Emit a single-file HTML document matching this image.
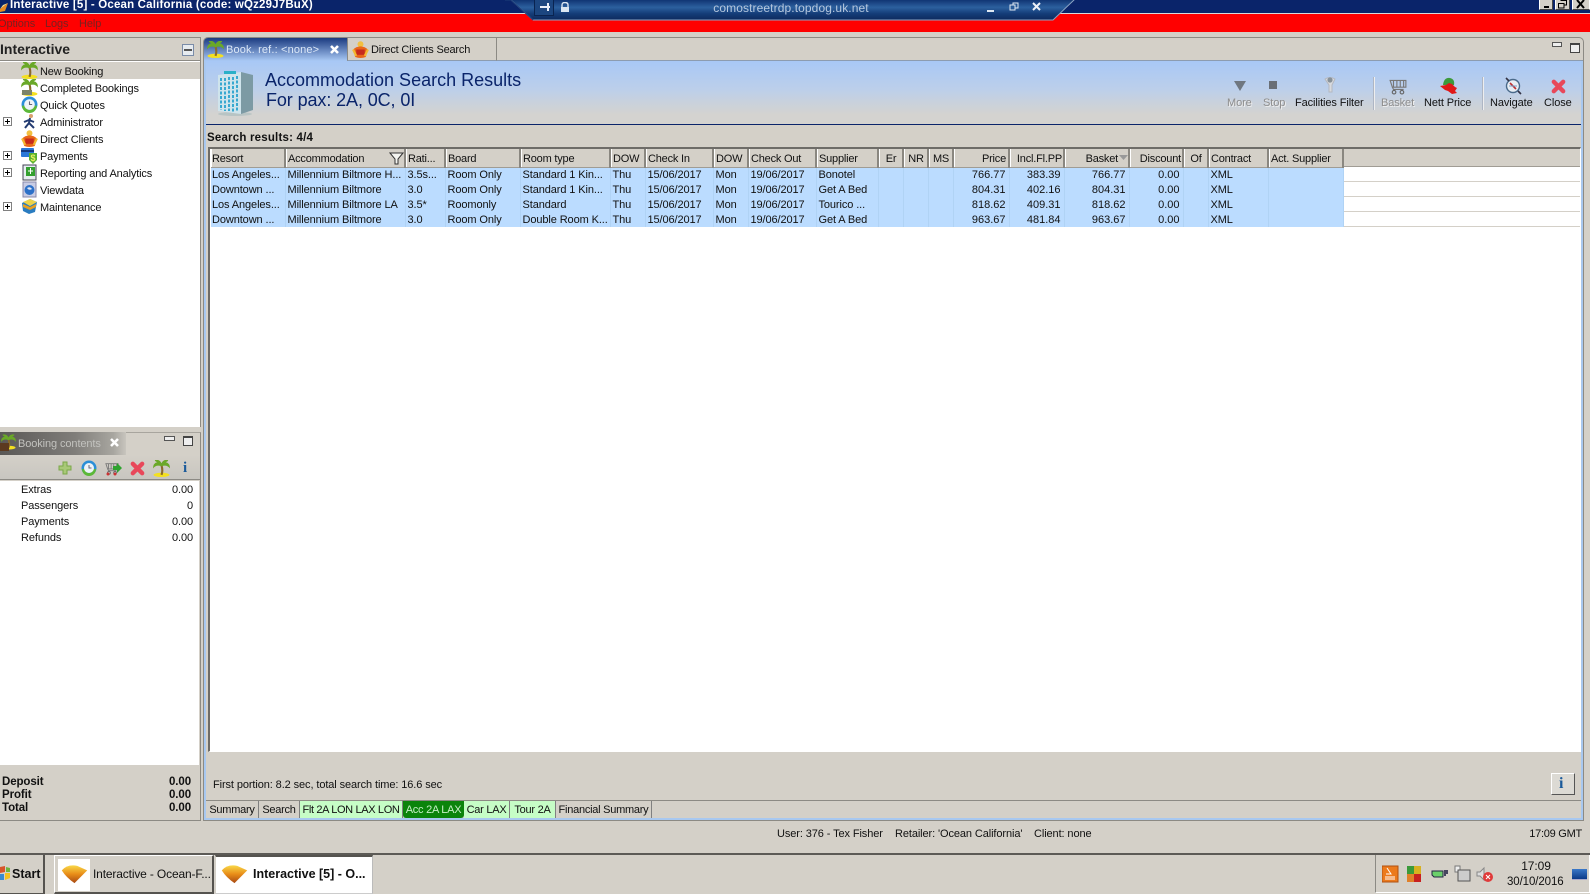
<!DOCTYPE html>
<html><head><meta charset="utf-8"><title>Interactive</title>
<style>
*{box-sizing:border-box}
html,body{margin:0;padding:0;width:1590px;height:894px;overflow:hidden;background:#d4d0c8}
body{position:relative;font:11px/14px "Liberation Sans",Arial,sans-serif;color:#111;letter-spacing:-.1px}
.a{position:absolute}
.t{position:absolute;white-space:nowrap}
.r{position:absolute;white-space:nowrap;text-align:right}
.m{position:absolute;display:block}
table{position:absolute;left:211px;top:149px;border-collapse:collapse;table-layout:fixed;width:1132px}
th{height:18px;padding:2px 1px 0 2px;font-weight:normal;text-align:left;background:#d4d0c8;border-right:2px solid #8a8780;border-bottom:1px solid #a09c94;box-shadow:inset 1px 0 0 #fff;white-space:nowrap;overflow:hidden;font-size:11px;letter-spacing:-.2px}
td{height:15px;padding:0 2px;background:#bbdcff;white-space:nowrap;overflow:hidden;border-right:1px solid #b0d3f5;line-height:14px;font-size:11px}
td:first-child,th:first-child{padding-left:1px}
td.n{text-align:right;padding-right:3px;letter-spacing:0}
.g{color:#8d8d8d;text-shadow:1px 1px 0 #eee}
.bt{position:absolute;top:801px;height:17px;text-align:center;line-height:19px;border-right:1px solid #808080;white-space:nowrap;letter-spacing:-.25px}
.tree{position:absolute;left:40px;white-space:nowrap;letter-spacing:-.15px}
.plus{position:absolute;left:3px;width:9px;height:9px;border:1px solid #808080;background:#fff}
.plus:before{content:"";position:absolute;left:1px;top:3px;width:5px;height:1px;background:#000}
.plus:after{content:"";position:absolute;left:3px;top:1px;width:1px;height:5px;background:#000}
</style></head><body>
<svg width="0" height="0" style="position:absolute"><defs>
<linearGradient id="gg" x1="0" y1="0" x2="0" y2="1"><stop offset="0" stop-color="#f9d848"/><stop offset=".5" stop-color="#e88c18"/><stop offset="1" stop-color="#a84a14"/></linearGradient>
<symbol id="palm" viewBox="0 0 16 16"><ellipse cx="8" cy="14" rx="7.5" ry="2" fill="#f4e020"/><path d="M8 5Q9.5 10 8 14" stroke="#8a6a2a" stroke-width="2" fill="none"/><path d="M8 6Q3 4 0 8Q0 3 4 2Q1 1 2 0Q6 -1 8 3Q10 -1 14 0Q15 1 12 2Q16 3 16 8Q13 4 8 6Z" fill="#6aa828"/></symbol>
<symbol id="gift" viewBox="0 0 16 16"><circle cx="8" cy="3" r="2.8" fill="#f2c040"/><path d="M1 8Q8 2 15 8L13 15Q8 17 3 15Z" fill="#e8661a"/><path d="M4 8H12V13H4Z" fill="#c62a1c"/><path d="M1 8L4 14M15 8L12 14" stroke="#f4b830" stroke-width="2"/></symbol>
<symbol id="x" viewBox="0 0 16 16"><path d="M3 3L13 13M13 3L3 13" stroke="#e8485a" stroke-width="4.6" stroke-linecap="round"/></symbol>
<symbol id="clock" viewBox="0 0 16 16"><circle cx="8" cy="8" r="7.5" fill="#2a8fd8"/><path d="M1 9A7 7 0 0 0 15 9L12 9A4 4 0 0 1 4 9Z" fill="#5cb838"/><circle cx="8" cy="8" r="5" fill="#eef4f8"/><path d="M8 5V8H10.5" stroke="#667" fill="none"/></symbol>
<symbol id="cart" viewBox="0 0 16 16"><path d="M1 3H15V9H3ZM4 3V9M7 3V9M10 3V9M13 3V9" stroke="#777" fill="none"/><path d="M3 9L4 11H13" stroke="#777" fill="none"/><circle cx="4.5" cy="13.5" r="1.6" fill="none" stroke="#666"/><circle cx="11.5" cy="13.5" r="1.6" fill="none" stroke="#666"/></symbol>
<symbol id="gem" viewBox="0 0 30 22"><path d="M1 7Q7 0 18 2L29 7L15 21Q6 15 1 7Z" fill="url(#gg)"/></symbol>
</defs></svg>

<!-- title bar -->
<div class="a" style="left:0;top:0;width:1590px;height:13px;background:#0a246a;overflow:hidden">
<div class="t" style="left:10px;top:-2px;color:#fff;font:bold 11.5px/15px 'Liberation Sans',sans-serif;letter-spacing:.18px">Interactive [5] - Ocean California (code: wQz29J7BuX)</div>
<svg class="m" style="left:0;top:0" width="9" height="13"><path d="M0 9L8 3L5 11L0 12Z" fill="#e88a20"/><path d="M0 9L8 3L3 5Z" fill="#fbe090"/></svg>
</div>
<div class="a" style="left:0;top:13px;width:1590px;height:1px;background:#d9d9d9"></div>
<div class="a" style="left:0;top:14px;width:1590px;height:18px;background:#f00"></div>
<div class="t" style="left:-2px;top:17px;color:#7a2020">Options</div>
<div class="t" style="left:45px;top:17px;color:#7a2020">Logs</div>
<div class="t" style="left:79px;top:17px;color:#7a2020">Help</div>

<!-- window buttons -->
<div class="a" style="left:1539px;top:-4px;width:14px;height:14px;background:#d4d0c8;border:1px solid #fff;border-right-color:#444;border-bottom-color:#444"></div>
<div class="a" style="left:1544px;top:6px;width:5px;height:2px;background:#000"></div>
<div class="a" style="left:1555px;top:-4px;width:15px;height:14px;background:#d4d0c8;border:1px solid #fff;border-right-color:#444;border-bottom-color:#444"></div>
<svg class="m" style="left:1557px;top:0" width="11" height="9"><path d="M3.5 .5H9.5V5H7M1.5 3.5H7V8H1.5Z" fill="none" stroke="#000"/></svg>
<div class="a" style="left:1572px;top:-4px;width:18px;height:14px;background:#d4d0c8;border:1px solid #fff;border-bottom-color:#444"></div>
<svg class="m" style="left:1576px;top:0" width="10" height="9"><path d="M1 0L8 8M8 0L1 8" stroke="#000" stroke-width="2"/></svg>

<!-- RDP bar -->
<svg class="m" style="left:505px;top:0" width="575" height="23">
<defs><linearGradient id="rd" x1="0" y1="0" x2="0" y2="1"><stop offset="0" stop-color="#0d2f6e"/><stop offset=".4" stop-color="#2c609e"/><stop offset=".7" stop-color="#143c78"/><stop offset="1" stop-color="#0e2a5e"/></linearGradient></defs>
<path d="M5 -1L28 20H548L570 -1Z" fill="url(#rd)" stroke="#8ca4c4"/>
<path d="M0 0L6 0L28 20" fill="none" stroke="#1c3e78"/>
</svg>
<div class="a" style="left:534px;top:-1px;width:20px;height:17px;border:1px solid #0a2450;background:#1c4680"></div>
<svg class="m" style="left:540px;top:2px" width="36" height="11"><path d="M0 5H10M8 1V9" stroke="#e8eef8" stroke-width="2" fill="none"/><path d="M22 5V3Q22 .5 25 .5Q28 .5 28 3V5" stroke="#dce6f2" fill="none" stroke-width="1.4"/><path d="M21 5H29V10H21Z" fill="#dce6f2"/></svg>
<div class="t" style="left:691px;top:1px;width:200px;text-align:center;color:#b6c8df;font-size:12px;letter-spacing:.1px">comostreetrdp.topdog.uk.net</div>
<svg class="m" style="left:985px;top:2px" width="62" height="11"><path d="M2 9H9" stroke="#dfe8f2" stroke-width="2"/><path d="M25 3H30V8H25ZM28 3V1H33V6H30" fill="none" stroke="#dfe8f2"/><path d="M48 1L55 8M55 1L48 8" stroke="#eef2f8" stroke-width="2"/></svg>

<!-- Left top panel -->
<div class="a" style="left:0;top:37px;width:201px;height:390px;background:#fff;border-top:1px solid #8c8a84;border-right:1px solid #8c8a84"></div>
<div class="a" style="left:0;top:38px;width:200px;height:23px;background:#d4d0c8;border-bottom:1px solid #8c8a84"></div>
<div class="t" style="left:0;top:41px;font:bold 14px/17px 'Liberation Sans',sans-serif;color:#222;letter-spacing:0">Interactive</div>
<div class="a" style="left:182px;top:44px;width:12px;height:12px;border:1px solid #7a8ca8;background:#e6ebf0"></div>
<div class="a" style="left:184px;top:49px;width:8px;height:2px;background:#555"></div>
<div class="a" style="left:0;top:62px;width:200px;height:17px;background:#d4d0c8"></div>
<svg class="m" style="left:21px;top:62px" width="17" height="17"><use href="#palm"/></svg>
<svg class="m" style="left:21px;top:79px" width="17" height="17"><use href="#palm"/><rect x="1" y="11" width="10" height="5" fill="#7c8468"/></svg>
<svg class="m" style="left:21px;top:96px" width="17" height="17"><use href="#clock"/></svg>
<svg class="m" style="left:22px;top:113px" width="16" height="17"><circle cx="9" cy="3" r="2" fill="#d9a070"/><path d="M8 5L7 10L3 15M7 10L12 15M7 7L12 9M7 7L2 9" stroke="#223a70" stroke-width="2" fill="none"/></svg>
<svg class="m" style="left:21px;top:130px" width="17" height="17"><use href="#gift"/></svg>
<svg class="m" style="left:21px;top:147px" width="17" height="17"><rect x="0" y="1" width="13" height="9" rx="1" fill="#2a78d8"/><rect x="0" y="3" width="13" height="2" fill="#123a80"/><path d="M8 6H16V13L12 17L8 13Z" fill="#58b030"/><text x="9.5" y="14" font-size="9" font-weight="bold" fill="#e8f060" font-family="Liberation Sans">$</text></svg>
<svg class="m" style="left:22px;top:164px" width="16" height="17"><rect x="1" y="1" width="13" height="15" fill="#e8eef2" stroke="#445"/><rect x="4" y="3" width="9" height="9" fill="#34a030"/><path d="M6 7H11M8.5 4V10" stroke="#fff"/></svg>
<svg class="m" style="left:22px;top:181px" width="16" height="17"><rect x="1" y="1" width="13" height="15" fill="#c8cce4" stroke="#8888aa"/><circle cx="7.5" cy="9" r="5" fill="#2c70c8"/><path d="M5 7Q8 5 10 8Q7 10 5 7" fill="#dfe8f8"/></svg>
<svg class="m" style="left:21px;top:198px" width="17" height="17"><path d="M1 5L9 1L16 4L14 14L8 16L2 13Z" fill="#2a7cc0"/><path d="M2 4L9 1L16 4L9 8Z" fill="#ecd34a"/><path d="M2 6L9 9L15 6V9L9 12L2 9Z" fill="#e8a020"/></svg>
<div class="tree" style="top:65px">New Booking</div>
<div class="tree" style="top:82px">Completed Bookings</div>
<div class="tree" style="top:99px">Quick Quotes</div>
<div class="tree" style="top:116px">Administrator</div>
<div class="tree" style="top:133px">Direct Clients</div>
<div class="tree" style="top:150px">Payments</div>
<div class="tree" style="top:167px">Reporting and Analytics</div>
<div class="tree" style="top:184px">Viewdata</div>
<div class="tree" style="top:201px">Maintenance</div>
<div class="plus" style="top:117px"></div><div class="plus" style="top:151px"></div><div class="plus" style="top:168px"></div><div class="plus" style="top:202px"></div>

<!-- Left bottom panel -->
<div class="a" style="left:0;top:432px;width:201px;height:389px;background:#d4d0c8;border-top:1px solid #a8a59e;border-right:1px solid #8c8a84;border-bottom:1px solid #8c8a84"></div>
<div class="a" style="left:0;top:432px;width:126px;height:23px;background:linear-gradient(90deg,#5a5856,#807e7a 60%,#a8a6a0 90%,#c8c5be);"></div>
<svg class="m" style="left:0;top:434px" width="16" height="19"><use href="#palm" x="1" y="0" width="15" height="16"/><rect x="0" y="9" width="9" height="8" fill="#5c3a20"/></svg>
<div class="t" style="left:18px;top:437px;color:#c2c2be;font-size:11px">Booking contents</div>
<svg class="m" style="left:109px;top:437px" width="11" height="11"><path d="M2 2L9 9M9 2L2 9" stroke="#fff" stroke-width="2.6"/></svg>
<div class="a" style="left:164px;top:436px;width:11px;height:5px;border:1px solid #555;background:#eee"></div>
<div class="a" style="left:183px;top:436px;width:10px;height:10px;border:1px solid #444;border-top-width:2px;background:#eee"></div>
<div class="a" style="left:0;top:455px;width:200px;height:25px;background:linear-gradient(#d4d0c8,#c8c6c0);border-bottom:1px solid #8c8a84"></div>
<svg class="m" style="left:58px;top:461px" width="14" height="15"><path d="M5 1H9V5H13V9H9V13H5V9H1V5H5Z" fill="#a8c878" stroke="#7aa848"/></svg>
<svg class="m" style="left:81px;top:460px" width="16" height="16"><use href="#clock"/></svg>
<svg class="m" style="left:105px;top:460px" width="18" height="16"><use href="#cart" width="14" height="16"/><path d="M8 6H12V3L17 8L12 13V10H8Z" fill="#2fa32f"/><circle cx="3" cy="14" r="1.5" fill="#c33"/><circle cx="10" cy="14" r="1.5" fill="#c33"/></svg>
<svg class="m" style="left:130px;top:461px" width="15" height="15"><use href="#x"/></svg>
<svg class="m" style="left:153px;top:460px" width="17" height="17"><use href="#palm"/></svg>
<div class="t" style="left:183px;top:459px;font:bold 15px/18px 'Liberation Serif',serif;color:#1a5a9a">i</div>
<div class="a" style="left:0;top:481px;width:199px;height:284px;background:#fff"></div>
<div class="t" style="left:21px;top:483px">Extras</div><div class="r" style="right:1397px;top:483px">0.00</div>
<div class="t" style="left:21px;top:499px">Passengers</div><div class="r" style="right:1397px;top:499px">0</div>
<div class="t" style="left:21px;top:515px">Payments</div><div class="r" style="right:1397px;top:515px">0.00</div>
<div class="t" style="left:21px;top:531px">Refunds</div><div class="r" style="right:1397px;top:531px">0.00</div>
<div class="t" style="left:2px;top:776px;font:bold 11.5px/13px 'Liberation Sans',sans-serif">Deposit<br>Profit<br>Total</div>
<div class="r" style="right:1399px;top:776px;font:bold 11.5px/13px 'Liberation Sans',sans-serif">0.00<br>0.00<br>0.00</div>

<!-- Main panel -->
<div class="a" style="left:203px;top:37px;width:1381px;height:784px;background:#d4d0c8;border:1px solid #8c8a84;border-radius:5px 5px 0 0"></div>
<div class="a" style="left:204px;top:61px;width:2px;height:758px;background:#a8c8f0"></div>
<div class="a" style="left:1581px;top:61px;width:2px;height:758px;background:#a8c8f0"></div>
<div class="a" style="left:204px;top:818px;width:1379px;height:2px;background:#a8c8f0"></div>
<div class="a" style="left:204px;top:60px;width:1379px;height:1px;background:#8c9cb0"></div>
<!-- active tab -->
<div class="a" style="left:204px;top:38px;width:143px;height:23px;background:linear-gradient(#1a3a80,#a9c9f5);border-radius:4px 0 0 0"></div>
<svg class="m" style="left:207px;top:41px" width="17" height="17"><use href="#palm"/></svg>
<div class="t" style="left:226px;top:43px;color:#dce8f8;letter-spacing:.15px">Book. ref.: &lt;none&gt;</div>
<svg class="m" style="left:329px;top:44px" width="11" height="11"><path d="M2 2L9 9M9 2L2 9" stroke="#fff" stroke-width="2.6"/></svg>
<div class="a" style="left:347px;top:38px;width:150px;height:23px;background:#d4d0c8;border-right:1px solid #8c8a84;border-left:1px solid #8c8a84;border-bottom:1px solid #8c9cb0"></div>
<svg class="m" style="left:352px;top:41px" width="17" height="17"><use href="#gift"/></svg>
<div class="t" style="left:371px;top:43px;letter-spacing:-.2px">Direct Clients Search</div>
<div class="a" style="left:1552px;top:42px;width:10px;height:5px;border:1px solid #555;background:#eee"></div>
<div class="a" style="left:1570px;top:43px;width:10px;height:10px;border:1px solid #444;border-top-width:2px;background:#eee"></div>

<!-- blue header -->
<div class="a" style="left:206px;top:61px;width:1375px;height:63px;background:linear-gradient(#a8c8f6,#bccfea 45%,#d4d3d0 85%)"></div>
<div class="a" style="left:206px;top:124px;width:1375px;height:1px;background:#0a246a"></div>
<svg class="m" style="left:217px;top:68px" width="38" height="48"><ellipse cx="18" cy="46" rx="17" ry="2" fill="#b8c4c4"/><path d="M1 7L24 4V46L1 43Z" fill="#cfe4ec"/><path d="M24 4L36 7V42L24 46Z" fill="#7c9aa4"/><g stroke="#38a8d0" stroke-width="2" stroke-dasharray="3 1.5"><path d="M4 10V42M8 10V43M12 9V43M16 9V44M20 8V44"/></g><rect x="7" y="3" width="12" height="3" fill="#2ab0c8"/></svg>
<div class="t" style="left:265px;top:69px;font:18px/22px 'Liberation Sans',sans-serif;color:#0a246a;letter-spacing:0">Accommodation Search Results</div>
<div class="t" style="left:266px;top:89px;font:18px/22px 'Liberation Sans',sans-serif;color:#0a246a;letter-spacing:-.1px">For pax: 2A, 0C, 0I</div>

<!-- toolbar -->
<svg class="m" style="left:1233px;top:80px" width="14" height="12"><path d="M1 1H13L7 11Z" fill="#6f7780"/></svg>
<div class="a" style="left:1269px;top:81px;width:8px;height:8px;background:#6a6f76"></div>
<svg class="m" style="left:1322px;top:76px" width="16" height="18"><path d="M3 3Q8 0 13 3L10 9V16H7V9Z" fill="#d8dade" stroke="#b4b8c0"/><circle cx="8" cy="4" r="2.6" fill="#88929a"/></svg>
<svg class="m" style="left:1389px;top:77px" width="18" height="18"><use href="#cart"/></svg>
<svg class="m" style="left:1440px;top:77px" width="18" height="18"><path d="M3 8Q4 0 10 1Q15 2 14 8Z" fill="#3c9a3c"/><path d="M0 9L6 8L9 6L12 7L15 10L17 11L15 14L17 16L12 17L8 14L5 13Z" fill="#e01818"/></svg>
<svg class="m" style="left:1504px;top:77px" width="18" height="18"><circle cx="9" cy="9" r="6.5" fill="#e8eef4" stroke="#4a6a8a" stroke-width="1.4"/><path d="M6 6L12 12" stroke="#c03030" stroke-width="1.6"/><path d="M5 9L13 9" stroke="#78a0c8"/><path d="M2 1L5 4M14 14L17 17" stroke="#334" stroke-width="1.6"/></svg>
<svg class="m" style="left:1551px;top:79px" width="15" height="15"><use href="#x"/></svg>
<div class="a" style="left:1373px;top:77px;width:1px;height:33px;background:#aeb6c4;box-shadow:1px 0 0 #eee"></div>
<div class="a" style="left:1482px;top:77px;width:1px;height:33px;background:#aeb6c4;box-shadow:1px 0 0 #eee"></div>
<div class="t g" style="left:1227px;top:96px">More</div>
<div class="t g" style="left:1263px;top:96px">Stop</div>
<div class="t" style="left:1295px;top:96px">Facilities Filter</div>
<div class="t g" style="left:1381px;top:96px">Basket</div>
<div class="t" style="left:1424px;top:96px">Nett Price</div>
<div class="t" style="left:1490px;top:96px">Navigate</div>
<div class="t" style="left:1544px;top:96px">Close</div>

<div class="t" style="left:207px;top:131px;font:bold 11.5px/14px 'Liberation Sans',sans-serif;letter-spacing:.2px">Search results: 4/4</div>

<!-- table frame -->
<div class="a" style="left:208px;top:147px;width:1373px;height:605px;background:#fff;border:2px solid #6e6c68;border-right:1px solid #fff;border-bottom:1px solid #fff"></div>
<div class="a" style="left:1343px;top:149px;width:237px;height:18px;background:#d4d0c8;border-bottom:1px solid #a09c94"></div>
<div class="a" style="left:1343px;top:181px;width:237px;height:1px;background:#d4d0c8"></div>
<div class="a" style="left:1343px;top:196px;width:237px;height:1px;background:#d4d0c8"></div>
<div class="a" style="left:1343px;top:211px;width:237px;height:1px;background:#d4d0c8"></div>
<div class="a" style="left:1343px;top:226px;width:237px;height:1px;background:#d4d0c8"></div>
<table>
<colgroup><col style="width:74px"><col style="width:120px"><col style="width:40px"><col style="width:75px"><col style="width:90px"><col style="width:35px"><col style="width:68px"><col style="width:35px"><col style="width:68px"><col style="width:62px"><col style="width:25px"><col style="width:25px"><col style="width:25px"><col style="width:56px"><col style="width:55px"><col style="width:65px"><col style="width:54px"><col style="width:25px"><col style="width:60px"><col style="width:75px"></colgroup>
<tr><th>Resort</th><th>Accommodation</th><th>Rati...</th><th>Board</th><th>Room type</th><th>DOW</th><th>Check In</th><th>DOW</th><th>Check Out</th><th>Supplier</th><th style="text-align:center">Er</th><th style="text-align:center">NR</th><th style="text-align:center">MS</th><th style="text-align:right;padding-right:2px">Price</th><th style="text-align:right;padding-right:1px">Incl.Fl.PP</th><th style="text-align:right;padding-right:10px">Basket</th><th style="text-align:right;padding-right:1px">Discount</th><th style="text-align:center">Of</th><th>Contract</th><th>Act. Supplier</th></tr>
<tr><td>Los Angeles...</td><td>Millennium Biltmore H...</td><td>3.5s...</td><td>Room Only</td><td>Standard 1 Kin...</td><td>Thu</td><td>15/06/2017</td><td>Mon</td><td>19/06/2017</td><td>Bonotel</td><td></td><td></td><td></td><td class="n">766.77</td><td class="n">383.39</td><td class="n">766.77</td><td class="n">0.00</td><td></td><td>XML</td><td></td></tr>
<tr><td>Downtown ...</td><td>Millennium Biltmore</td><td>3.0</td><td>Room Only</td><td>Standard 1 Kin...</td><td>Thu</td><td>15/06/2017</td><td>Mon</td><td>19/06/2017</td><td>Get A Bed</td><td></td><td></td><td></td><td class="n">804.31</td><td class="n">402.16</td><td class="n">804.31</td><td class="n">0.00</td><td></td><td>XML</td><td></td></tr>
<tr><td>Los Angeles...</td><td>Millennium Biltmore LA</td><td>3.5*</td><td>Roomonly</td><td>Standard</td><td>Thu</td><td>15/06/2017</td><td>Mon</td><td>19/06/2017</td><td>Tourico ...</td><td></td><td></td><td></td><td class="n">818.62</td><td class="n">409.31</td><td class="n">818.62</td><td class="n">0.00</td><td></td><td>XML</td><td></td></tr>
<tr><td>Downtown ...</td><td>Millennium Biltmore</td><td>3.0</td><td>Room Only</td><td>Double Room K...</td><td>Thu</td><td>15/06/2017</td><td>Mon</td><td>19/06/2017</td><td>Get A Bed</td><td></td><td></td><td></td><td class="n">963.67</td><td class="n">481.84</td><td class="n">963.67</td><td class="n">0.00</td><td></td><td>XML</td><td></td></tr>
</table>
<svg class="m" style="left:389px;top:152px" width="15" height="13"><path d="M1 1H14L9 7V12H6V7Z" fill="#f4f4f0" stroke="#333"/></svg>
<svg class="m" style="left:1119px;top:155px" width="9" height="6"><path d="M0 0H9L4.5 5Z" fill="#999"/></svg>

<div class="t" style="left:213px;top:778px">First portion: 8.2 sec, total search time: 16.6 sec</div>
<div class="a" style="left:1551px;top:773px;width:24px;height:22px;background:#dcdad4;border:1px solid #fff;border-right-color:#555;border-bottom-color:#555"></div>
<div class="t" style="left:1559px;top:774px;font:bold 16px/20px 'Liberation Serif',serif;color:#1a5a9a">i</div>

<!-- bottom tabs -->
<div class="a" style="left:206px;top:800px;width:1375px;height:1px;background:#8c8a84"></div>
<div class="bt" style="left:206px;width:53px">Summary</div>
<div class="bt" style="left:259px;width:41px">Search</div>
<div class="bt" style="left:300px;width:103px;background:#c6fdc6;letter-spacing:-.35px">Flt 2A LON LAX LON</div>
<div class="bt" style="left:403px;width:61px;background:#0b840b;color:#c6f0c6;border-radius:0 0 3px 3px;border:0">Acc 2A LAX</div>
<div class="bt" style="left:464px;width:46px;background:#c6fdc6">Car LAX</div>
<div class="bt" style="left:510px;width:46px;background:#c6fdc6">Tour 2A</div>
<div class="bt" style="left:556px;width:96px">Financial Summary</div>

<!-- status -->
<div class="t" style="left:777px;top:827px">User: 376 - Tex Fisher</div>
<div class="t" style="left:895px;top:827px">Retailer: 'Ocean California'</div>
<div class="t" style="left:1034px;top:827px">Client: none</div>
<div class="r" style="right:8px;top:827px;letter-spacing:-.25px">17:09 GMT</div>

<!-- taskbar -->
<div class="a" style="left:0;top:853px;width:1590px;height:2px;background:#5c5a56"></div>
<div class="a" style="left:0;top:855px;width:45px;height:39px;background:#d4d0c8;border-right:2px solid #55534f;border-bottom:1px solid #55534f"></div>
<svg class="m" style="left:0;top:866px" width="11" height="15"><path d="M0 1L5 0V6L0 7Z" fill="#d8552a"/><path d="M5 7H10V12L5 14Z" fill="#f4c020"/><path d="M0 8H4V14H0Z" fill="#3a8ad0"/><path d="M6 1L10 2V6H6Z" fill="#6db33f"/></svg>
<div class="t" style="left:12px;top:866px;font:bold 12.5px/16px 'Liberation Sans',sans-serif;letter-spacing:0">Start</div>
<div class="a" style="left:54px;top:855px;width:160px;height:39px;border:1px solid #fff;border-right:2px solid #55534f;border-bottom:2px solid #55534f;background:#d4d0c8"></div>
<div class="a" style="left:58px;top:859px;width:32px;height:32px;background:#fff"></div>
<svg class="m" style="left:60px;top:864px" width="29" height="20"><use href="#gem"/></svg>
<div class="t" style="left:93px;top:866px;font-size:12px;line-height:16px;letter-spacing:-.15px">Interactive - Ocean-F...</div>
<div class="a" style="left:215px;top:855px;width:158px;height:39px;background:#fff;border:1px solid #d4d0c8;border-top:2px solid #55534f;border-right-color:#bbb;border-bottom-color:#ccc"></div>
<svg class="m" style="left:220px;top:864px" width="29" height="20"><use href="#gem"/></svg>
<div class="t" style="left:253px;top:866px;font:bold 12.5px/16px 'Liberation Sans',sans-serif;letter-spacing:0">Interactive [5] - O...</div>

<!-- tray -->
<div class="a" style="left:1375px;top:855px;width:215px;height:38px;border-left:1px solid #8c8a84;border-bottom:1px solid #fff;border-right:1px solid #fff"></div>
<svg class="m" style="left:1382px;top:865px" width="112" height="18">
<rect x="0" y="1" width="16" height="16" fill="#ec7a1c" stroke="#b05010"/><path d="M5 3L9 9H4M3 12H13M3 14H13" stroke="#fff" fill="none"/>
<rect x="25" y="1" width="7" height="8" fill="#3a9a3a"/><rect x="32" y="1" width="7" height="8" fill="#d8b020"/><rect x="25" y="9" width="7" height="8" fill="#e0802a"/><rect x="32" y="9" width="7" height="8" fill="#c82020"/>
<path d="M50 6H61V12H52L50 10Z" fill="#6ad06a" stroke="#224"/><path d="M63 5V11M65 5V9" stroke="#224" stroke-width="1.6"/>
<path d="M73 1H78V7H73Z" fill="#eee" stroke="#777"/><rect x="76" y="5" width="12" height="11" fill="#ccc" stroke="#555"/>
<path d="M95 7H98L102 3V15L98 11H95Z" fill="#ddd" stroke="#888"/><circle cx="106" cy="12" r="5" fill="#e03a3a"/><path d="M104 10L108 14M108 10L104 14" stroke="#fff"/>
</svg>
<div class="t" style="left:1512px;top:859px;width:48px;text-align:center;font-size:12px">17:09</div>
<div class="t" style="left:1507px;top:875px;font-size:11.5px">30/10/2016</div>
<div class="a" style="left:1572px;top:869px;width:15px;height:11px;background:linear-gradient(#3a78c8,#0c3a88);border-bottom:1px solid #aac"></div>
</body></html>
